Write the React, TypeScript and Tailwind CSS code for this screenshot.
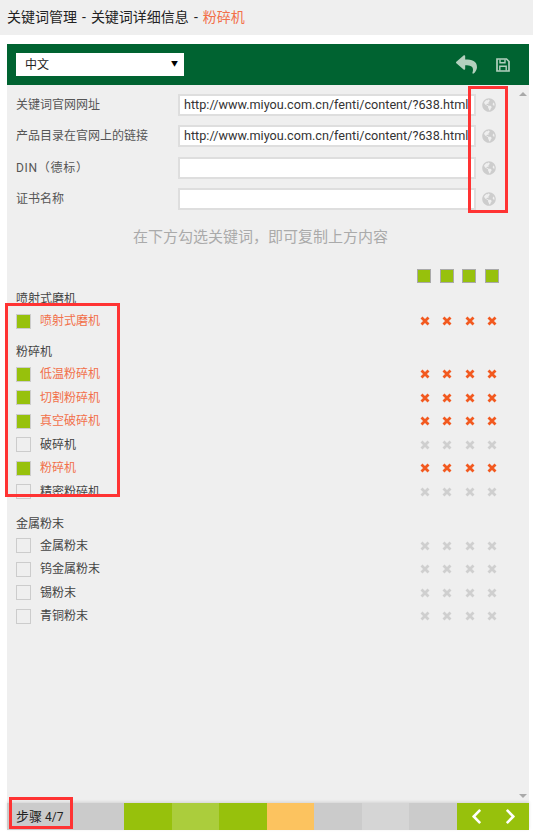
import React from "react";
import { FaGlobeAmericas, FaReply, FaChevronLeft, FaChevronRight } from "react-icons/fa";

type Item = { label: string; on: boolean };
type Group = { title: string; items: Item[] };

const fields = [
  { label: "关键词官网网址", value: "http://www.miyou.com.cn/fenti/content/?638.html", cls: "" },
  { label: "产品目录在官网上的链接", value: "http://www.miyou.com.cn/fenti/content/?638.html", cls: "" },
  { label: "DIN（德标）", value: "", cls: "tracking-[0.7px]" },
  { label: "证书名称", value: "", cls: "" },
];

const groups: Group[] = [
  { title: "喷射式磨机", items: [{ label: "喷射式磨机", on: true }] },
  {
    title: "粉碎机",
    items: [
      { label: "低温粉碎机", on: true },
      { label: "切割粉碎机", on: true },
      { label: "真空破碎机", on: true },
      { label: "破碎机", on: false },
      { label: "粉碎机", on: true },
      { label: "精密粉碎机", on: false },
    ],
  },
  {
    title: "金属粉末",
    items: [
      { label: "金属粉末", on: false },
      { label: "钨金属粉末", on: false },
      { label: "锡粉末", on: false },
      { label: "青铜粉末", on: false },
    ],
  },
];

const steps = [
  "bg-[#97c10c]",
  "bg-[#abcd3c]",
  "bg-[#97c10c]",
  "bg-[#fcc35f]",
  "bg-[#cbcbcb]",
  "bg-[#d5d5d5]",
  "bg-[#cbcbcb]",
];

const Cross = ({ on }: { on: boolean }) => (
  <svg viewBox="0 0 10 10" className={`h-[10px] w-[10px] ${on ? "text-[#f2591f]" : "text-[#cfcfcf]"}`}>
    <path d="M1.5 1.5 8.5 8.5M8.5 1.5 1.5 8.5" stroke="currentColor" strokeWidth="2.8" />
  </svg>
);

const Marks = ({ on }: { on: boolean }) => (
  <div className="flex w-[77px] justify-between">
    {[0, 1, 2, 3].map((i) => (
      <Cross key={i} on={on} />
    ))}
  </div>
);

const SaveIcon = () => (
  <svg viewBox="0 0 14 14" className="h-[14px] w-[14px]" fill="none" stroke="currentColor">
    <path d="M1 1h9.5L13 3.5V13H1z" strokeWidth="1.7" />
    <path d="M4 1.5v3.2h5V1.5" strokeWidth="1.4" />
    <path d="M3.8 12.5V8.2h6.4v4.3" strokeWidth="1.4" />
  </svg>
);

const App: React.FC = () => (
  <div className="relative flex h-[834px] flex-col overflow-hidden bg-white font-['Roboto','Noto_Sans_CJK_SC',sans-serif] text-xs text-[#333]">
    <div className="flex h-[35px] shrink-0 items-center bg-[#efefef] px-[7px] text-[14px] text-[#222]">
      关键词管理<span className="mx-[5px]">-</span>关键词详细信息<span className="mx-[5px]">-</span>
      <span className="text-[#f2704a]">粉碎机</span>
    </div>

    <div className="mt-[9px] mr-[4px] ml-[7px] flex min-h-0 flex-1 flex-col">
      <div className="flex h-[41px] shrink-0 items-center justify-between bg-[#006331] pr-[19px] pl-[9px]">
        <div className="flex h-[23px] w-[168px] items-center justify-between bg-white pr-[6px] pl-[9px] text-xs text-[#222]">
          <span>中文</span>
          <span className="text-[7px] text-black">▼</span>
        </div>
        <div className="flex items-center gap-[19px] text-[#b3d0be]">
          <FaReply className="h-[21px] w-[21px]" />
          <SaveIcon />
        </div>
      </div>

      <div className="flex min-h-0 flex-1 bg-[#efefef]">
        <div className="min-w-0 flex-1">
          <div className="flex flex-col gap-[9.3px] pt-[9px] pl-[9px]">
            {fields.map((f) => (
              <div key={f.label} className="flex h-[22px] items-center">
                <div className={`w-[162px] shrink-0 text-[#555] ${f.cls}`}>{f.label}</div>
                <div className="flex h-[22px] w-[298px] shrink-0 items-center overflow-hidden border-2 border-[#dedede] bg-white pl-1 text-[12.65px] whitespace-nowrap text-[#333]">
                  {f.value}
                </div>
                <FaGlobeAmericas className="ml-[6px] h-[14px] w-[14px] text-[#cdcdcd]" />
              </div>
            ))}
          </div>

          <div className="mt-[16px] pr-[2px] text-center text-[15px] leading-[22px] text-[#aaa]">
            在下方勾选关键词，即可复制上方内容
          </div>

          <div className="mt-[21px] flex h-[14px] justify-end gap-[8.67px] pr-[17px]">
            {[0, 1, 2, 3].map((i) => (
              <div key={i} className="h-[14px] w-[14px] border border-[#a9a9a9] bg-[#97c10c]" />
            ))}
          </div>

          <div className="mt-[4px] flex flex-col gap-[7px] pl-[9px]">
            {groups.map((g) => (
              <div key={g.title} className="last:mt-[2px] last:[&>div:first-child]:h-[21.5px]">
                <div className="flex h-[22.5px] items-center pt-[2px] text-[#444]">{g.title}</div>
                {g.items.map((it) => (
                  <div key={it.label} className="flex h-[23.5px] items-center pr-[19px]">
                    <div
                      className={`h-[15px] w-[15px] shrink-0 border border-[#ccc] ${
                        it.on ? "bg-[#97c10c]" : "bg-[#efefef]"
                      }`}
                    />
                    <div className={`ml-[9px] flex-1 ${it.on ? "text-[#f2704a]" : "text-[#444]"}`}>{it.label}</div>
                    <Marks on={it.on} />
                  </div>
                ))}
              </div>
            ))}
          </div>
        </div>

        <div className="flex w-[13px] shrink-0 flex-col items-center justify-between pt-[7px] pb-[5px]">
          <div className="h-0 w-0 border-x-[4px] border-b-[4px] border-x-transparent border-b-[#a9a9a9]" />
          <div className="h-0 w-0 border-x-[4px] border-t-[4px] border-x-transparent border-t-[#a9a9a9]" />
        </div>
      </div>

      <div className="mb-[4px] flex h-[27px] shrink-0 shadow-[0_-1px_3px_rgba(0,0,0,0.12)]">
        <div className="flex w-[117px] items-center gap-[3px] bg-[#cbcbcb] pl-[9px] text-[13px] text-[#222]">
          <span>步骤</span>
          <span className="text-[12px]">4/7</span>
        </div>
        {steps.map((s, i) => (
          <div key={i} className={`flex-1 ${s}`} />
        ))}
        <div className="flex w-[72px] items-center justify-between bg-[#97c10c] pr-[10px] pl-[11px] text-white">
          <FaChevronLeft className="h-[17px] w-[17px]" />
          <FaChevronRight className="h-[17px] w-[17px]" />
        </div>
      </div>
    </div>

    {/* red annotation boxes */}
    <div className="absolute top-[86px] left-[468px] h-[127px] w-[40px] border-[3px] border-[#ff3333]" />
    <div className="absolute top-[303px] left-[5px] h-[194px] w-[115px] border-[3px] border-[#ff3333]" />
    <div className="absolute top-[797px] left-[9px] h-[32px] w-[64px] border-[3px] border-[#ff3333]" />
  </div>
);

export default App;
